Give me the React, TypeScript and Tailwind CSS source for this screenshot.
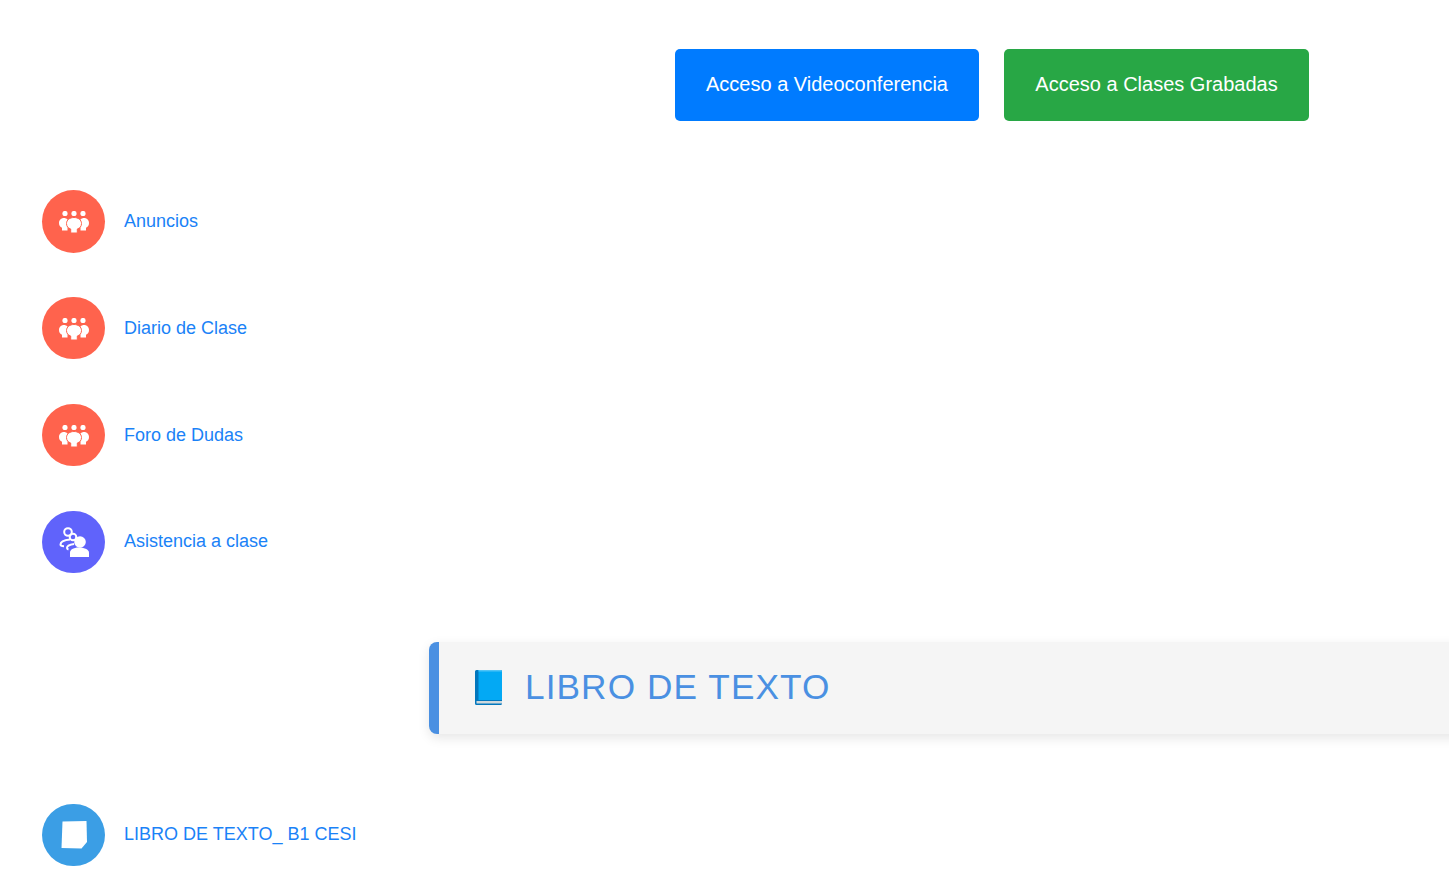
const font = "font-['Liberation_Sans',Arial,sans-serif]";

function People() {
  return (
    <svg width="30" height="22" viewBox="0 0 30 22" fill="white" className="mt-[2px]">
      <circle cx="6" cy="2.500" r="2.600" />
      <circle cx="15" cy="2.500" r="2.600" />
      <circle cx="24" cy="2.500" r="2.600" />
      <path d="M5 7C2 7 0 9.200 0 12c0 2.500 1.200 4 3 4.800V19.500h5.500V8.500C7.500 7.500 6.300 7 5 7z" />
      <path d="M25 7c3 0 5 2.200 5 5 0 2.500-1.200 4-3 4.800v2.700h-5.500V8.500C22.500 7.500 23.700 7 25 7z" />
      <path d="M15 6.500c-4.200 0-7.500 2.400-7.500 6 0 2.800 1.500 4.600 4.200 5.500V22h6.600v-4c2.700-.9 4.200-2.700 4.200-5.500 0-3.600-3.300-6-7.500-6z" stroke="#ff634d" strokeWidth="1" />
    </svg>
  );
}

function Attendance() {
  return (
    <svg width="30" height="30" viewBox="0 0 30 30" fill="none">
      <circle cx="9" cy="5" r="3.800" stroke="white" strokeWidth="2" />
      <circle cx="14" cy="10" r="3.300" stroke="white" strokeWidth="2" />
      <path d="M11 12.500C5.500 13 1.500 15 1.500 17.500c0 1.200 1.200 1.800 3.500 1.800" stroke="white" strokeWidth="2" />
      <path d="M15 17c-3.500.5-7 1.800-7 4 0 .8.500 1.200 1.500 1.500" stroke="white" strokeWidth="2" />
      <circle cx="21" cy="15" r="5.800" fill="white" />
      <path d="M11 30v-4.500c0-2.500 3-5 9-5s10 2.500 10 5V30z" fill="white" />
    </svg>
  );
}

function Doc() {
  return (
    <svg width="26" height="28" viewBox="0 0 26 28" fill="white">
      <path d="M1.500 .5 25.500 0 26 21l-5.500 6.500L.5 27z" />
    </svg>
  );
}

function Book() {
  return (
    <svg width="27" height="35" viewBox="0 0 27 35" className="shrink-0">
      <path d="M1.500 0h24a1.500 1.500 0 0 1 1.500 1.500v32a1.500 1.500 0 0 1-1.500 1.500h-24A1.500 1.500 0 0 1 0 33.500v-32A1.500 1.500 0 0 1 1.500 0z" fill="#0277bd" />
      <path d="M3.500 0h22a1.500 1.500 0 0 1 1.500 1.500V30H3.500z" fill="#03a9f4" />
      <path d="M1.500 31h25.500v2.500H1.500z" fill="#cfd8dc" />
      <path d="M3.500 0h22a1.500 1.500 0 0 1 1.500 1.500H3.500z" fill="#4fc3f7" />
    </svg>
  );
}

function Row({ label, color, icon, className }: { label: string; color: string; icon: React.ReactNode; className: string }) {
  return (
    <div className={`flex items-center gap-[19px] ${className}`}>
      <span className={`flex h-[62.5px] w-[63px] items-center justify-center rounded-full ${color}`}>{icon}</span>
      <a className="text-[18px] leading-[27px] text-[#1a82f7]" href="#">{label}</a>
    </div>
  );
}

export default function App() {
  return (
    <div className={`${font} h-[893px] w-[1449px] overflow-hidden bg-white`}>
      <div className="flex gap-[25px] pl-[675px] pt-[49px]">
        <a className="flex h-[72px] w-[304px] items-center justify-center rounded-[5px] bg-[#007bff] pb-[2px] text-[20px] text-white" href="#">Acceso a Videoconferencia</a>
        <a className="flex h-[72px] w-[305px] items-center justify-center rounded-[5px] bg-[#28a745] pb-[2px] text-[20px] text-white" href="#">Acceso a Clases Grabadas</a>
      </div>
      <div className="pl-[42px] pt-[69.2px]">
        <Row label="Anuncios" color="bg-[#ff634d]" icon={<People />} className="mb-[44.3px]" />
        <Row label="Diario de Clase" color="bg-[#ff634d]" icon={<People />} className="mb-[44.3px]" />
        <Row label="Foro de Dudas" color="bg-[#ff634d]" icon={<People />} className="mb-[44.3px]" />
        <Row label="Asistencia a clase" color="bg-[#6063fb]" icon={<Attendance />} className="" />
      </div>
      <div className="ml-[429px] mt-[68.900px] flex h-[92px] w-[1040px] items-center gap-[23px] rounded-[8px] border-l-[10px] border-[#4a90e2] bg-[#f5f5f5] pl-[36px] text-[35.2px] tracking-[1.100px] text-[#4a90e2] shadow-[0_4px_12px_rgba(0,0,0,0.1)]">
        <Book />
        <span className="-mt-[2px]">LIBRO DE TEXTO</span>
      </div>
      <div className="pl-[42px] pt-[69.600px]">
        <Row label="LIBRO DE TEXTO_ B1 CESI" color="bg-[#3b9ee5]" icon={<Doc />} className="" />
      </div>
    </div>
  );
}
